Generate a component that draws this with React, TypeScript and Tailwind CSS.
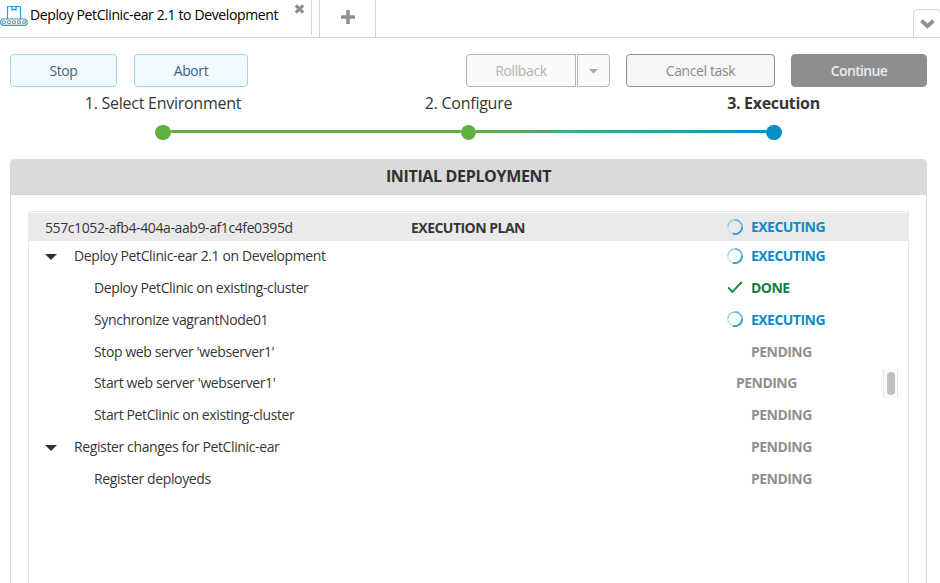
import type { ReactNode } from "react";

type Status = "EXECUTING" | "DONE" | "PENDING";

interface Step {
  label: string;
  status: Status;
  group?: boolean;
  height: string;
  scroll?: boolean;
}

const steps: Step[] = [
  { label: "Deploy PetClinic-ear 2.1 on Development", status: "EXECUTING", group: true, height: "h-[31px] pb-px" },
  { label: "Deploy PetClinic on existing-cluster", status: "DONE", height: "h-8" },
  { label: "Synchronize vagrantNode01", status: "EXECUTING", height: "h-8" },
  { label: "Stop web server 'webserver1'", status: "PENDING", height: "h-8" },
  { label: "Start web server 'webserver1'", status: "PENDING", height: "h-[31px] pb-px", scroll: true },
  { label: "Start PetClinic on existing-cluster", status: "PENDING", height: "h-8" },
  { label: "Register changes for PetClinic-ear", status: "PENDING", group: true, height: "h-8" },
  { label: "Register deployeds", status: "PENDING", height: "h-8" },
];

function ConveyorIcon() {
  return (
    <svg width="28" height="22" viewBox="0 0 28 22" fill="none" className="shrink-0">
      <path d="M7.5 14.5V1.5H20.5V14.5" stroke="#2b9ccb" strokeWidth="1.2" />
      <path d="M12 1.5V5.3L14 4.2L16 5.3V1.5" stroke="#2b9ccb" strokeWidth="1.2" />
      <rect x="0.6" y="14" width="26.6" height="6.4" rx="3.2" stroke="#2b9ccb" strokeWidth="1.2" />
      {[4, 9, 14, 19, 24].map((x) => (
        <circle key={x} cx={x} cy="17.2" r="1.5" stroke="#8a8a8a" strokeWidth="1.1" />
      ))}
    </svg>
  );
}

function Spinner() {
  return (
    <svg width="16" height="16" viewBox="0 0 16 16" fill="none">
      <path d="M5.2 14.6A7.1 7.1 0 0 1 .9 8" stroke="#c9e7f3" strokeWidth="1.5" />
      <path d="M.9 8A7.1 7.1 0 0 1 8 .9" stroke="#93cfe8" strokeWidth="1.5" />
      <path d="M8 .9A7.1 7.1 0 0 1 15.1 8" stroke="#5fb5db" strokeWidth="1.7" />
      <path d="M15.1 8A7.1 7.1 0 0 1 5.6 14.7" stroke="#2b9fd0" strokeWidth="1.8" />
    </svg>
  );
}

function Check() {
  return (
    <svg width="16" height="16" viewBox="0 0 16 16" fill="none">
      <path d="M1.2 8.4L5.3 12.8L14.8 3" stroke="#128a43" strokeWidth="1.9" />
    </svg>
  );
}

const statusColor: Record<Status, string> = {
  EXECUTING: "text-[#0d8bc5]",
  DONE: "text-[#128043]",
  PENDING: "text-[#909090]",
};

function StatusCell({ status, lowIcon = false }: { status: Status; lowIcon?: boolean }) {
  return (
    <div className={`flex items-center font-bold tracking-[-0.53px] ${statusColor[status]}`}>
      <span className={`flex w-[25px] pl-px ${lowIcon ? "" : "-translate-y-px"}`}>
        {status === "EXECUTING" && <Spinner />}
        {status === "DONE" && <Check />}
      </span>
      {status}
    </div>
  );
}

function Button({ className, children }: { className: string; children: ReactNode }) {
  return (
    <button className={`flex h-[33px] items-center justify-center border text-[14px] ${className}`}>{children}</button>
  );
}

function Caret({ className }: { className: string }) {
  return (
    <svg width="12" height="6" viewBox="0 0 12 6" className={className}>
      <path d="M0 0H12L6 6Z" fill="currentColor" />
    </svg>
  );
}

export default function App() {
  return (
    <div className="flex h-[583px] w-[940px] flex-col overflow-hidden bg-white font-['Open_Sans','Noto_Sans',sans-serif] text-[14px] leading-5 tracking-[-0.38px] text-[#363636]">
      <header className="flex h-[38px] shrink-0 border-b border-[#d3d3d3]">
        <div className="flex h-[35px] w-[312px] border-r border-[#d3d3d3] pt-[5px]">
          <ConveyorIcon />
          <span className="ml-[2px] w-[264px] whitespace-nowrap text-[14px] text-black">Deploy PetClinic-ear 2.1 to Development</span>
          <svg width="11" height="10" viewBox="0 0 11 10" className="-mt-px shrink-0">
            <path d="M1.8 1.4L9.2 8.6M9.2 1.4L1.8 8.6" stroke="#8e8e8e" strokeWidth="3.1" />
          </svg>
        </div>
        <div className="ml-[7px] flex w-[57px] justify-center border-x border-[#d3d3d3] pt-[10px]">
          <svg width="14" height="14" viewBox="0 0 14 14">
            <path d="M7 0V14M0 7H14" stroke="#919191" strokeWidth="3.6" />
          </svg>
        </div>
        <div className="mt-[9px] -mr-px ml-auto flex h-[27px] w-7 justify-center rounded-t-[5px] border border-b-0 border-[#d3d3d3] pt-[9px]">
          <svg width="15" height="10" viewBox="0 0 15 10">
            <path d="M1.5 1.6L7.5 7.2L13.5 1.6" stroke="#8e8e8e" strokeWidth="3.8" fill="none" />
          </svg>
        </div>
      </header>

      <div className="mt-4 flex shrink-0 pl-[10px]">
        <Button className="w-[107px] rounded border-[#95d9ec] bg-[#f2f9ff] text-[#46607a]">Stop</Button>
        <Button className="ml-[17px] w-[114px] rounded border-[#95d9ec] bg-[#f2f9ff] text-[#46607a]">Abort</Button>
        <Button className="ml-[218px] w-[110px] rounded-l border-[#b4b4b4] bg-[#fafafa] text-[#b2b2b2]">Rollback</Button>
        <Button className="ml-px w-[33px] rounded-r border-[#b4b4b4] bg-[#fafafa] text-[#a8a8a8]">
          <Caret className="mt-[2px] h-[4.5px] w-[9px]" />
        </Button>
        <Button className="ml-4 w-[149px] rounded border-[#8c8c8c] bg-[#f6f6f6] text-[#8a8a8a]">Cancel task</Button>
        <Button className="ml-4 w-[136px] rounded border-[#8e8e8e] bg-[#8e8e8e] font-semibold tracking-[-0.65px] text-[#ececec]">
          Continue
        </Button>
      </div>

      <div className="mt-[5px] flex shrink-0 pl-[10px] text-center text-[16px] leading-[22px] tracking-[-0.26px]">
        <span className="w-[306px]">1. Select Environment</span>
        <span className="w-[305px]">2. Configure</span>
        <span className="w-[305px] font-bold tracking-[-0.32px]">3. Execution</span>
      </div>
      <div className="mt-[11px] flex h-[15px] shrink-0 items-center pl-[155px]">
        <i className="h-[15px] w-4 rounded-full bg-[#5fb041]" />
        <i className="mb-[2px] h-[3px] w-[290px] bg-[#5fb041]" />
        <i className="size-[15px] rounded-full bg-[#5fb041]" />
        <i className="mb-[2px] h-[3px] w-[290px] bg-linear-to-r from-[#5fb041] to-[#0590c8]" />
        <i className="h-[15px] w-4 rounded-full bg-[#0590c8]" />
      </div>

      <section className="mt-[19px] ml-[10px] flex w-[917px] grow flex-col rounded-t-[5px] border-x border-[#d9d9d9]">
        <h2 className="-mx-px flex h-9 shrink-0 items-center justify-center rounded-t-[5px] border-b border-[#d3d3d3] bg-[#dadada] pb-px text-[16px] font-bold tracking-[-0.34px] text-[#303030]">
          INITIAL DEPLOYMENT
        </h2>
        <div className="mx-[17px] mt-4 grow rounded-t-[3px] border border-b-0 border-[#e8e8e8] pt-px">
          <div className="flex h-7 items-center bg-[#eaeaea] pl-4">
            <span className="w-[366px] pt-[2px] tracking-[-0.4px]">557c1052-afb4-404a-aab9-af1c4fe0395d</span>
            <span className="w-[315px] pt-[2px] font-bold tracking-[-0.52px]">EXECUTION PLAN</span>
            <StatusCell status="EXECUTING" lowIcon />
          </div>
          {steps.map((s, i) => (
            <div key={s.label} className={`flex items-center pl-4 ${s.height}`}>
              <span className="w-[29px]">{s.group && <Caret className="mt-[2px] text-[#303030]" />}</span>
              <span className={s.group ? "w-[652px]" : s.scroll ? "w-[637px] pl-5" : "w-[652px] pl-5"}>{s.label}</span>
              <StatusCell status={s.status} lowIcon={i === 0} />
              {s.scroll && (
                <span className="mr-[10px] ml-auto flex h-[29px] w-[15px] items-center justify-center border-x border-[#e8e8e8] bg-[#fafafa]">
                  <i className="h-[23px] w-2 rounded-full bg-[#c0c0c0]" />
                </span>
              )}
            </div>
          ))}
        </div>
      </section>
    </div>
  );
}
